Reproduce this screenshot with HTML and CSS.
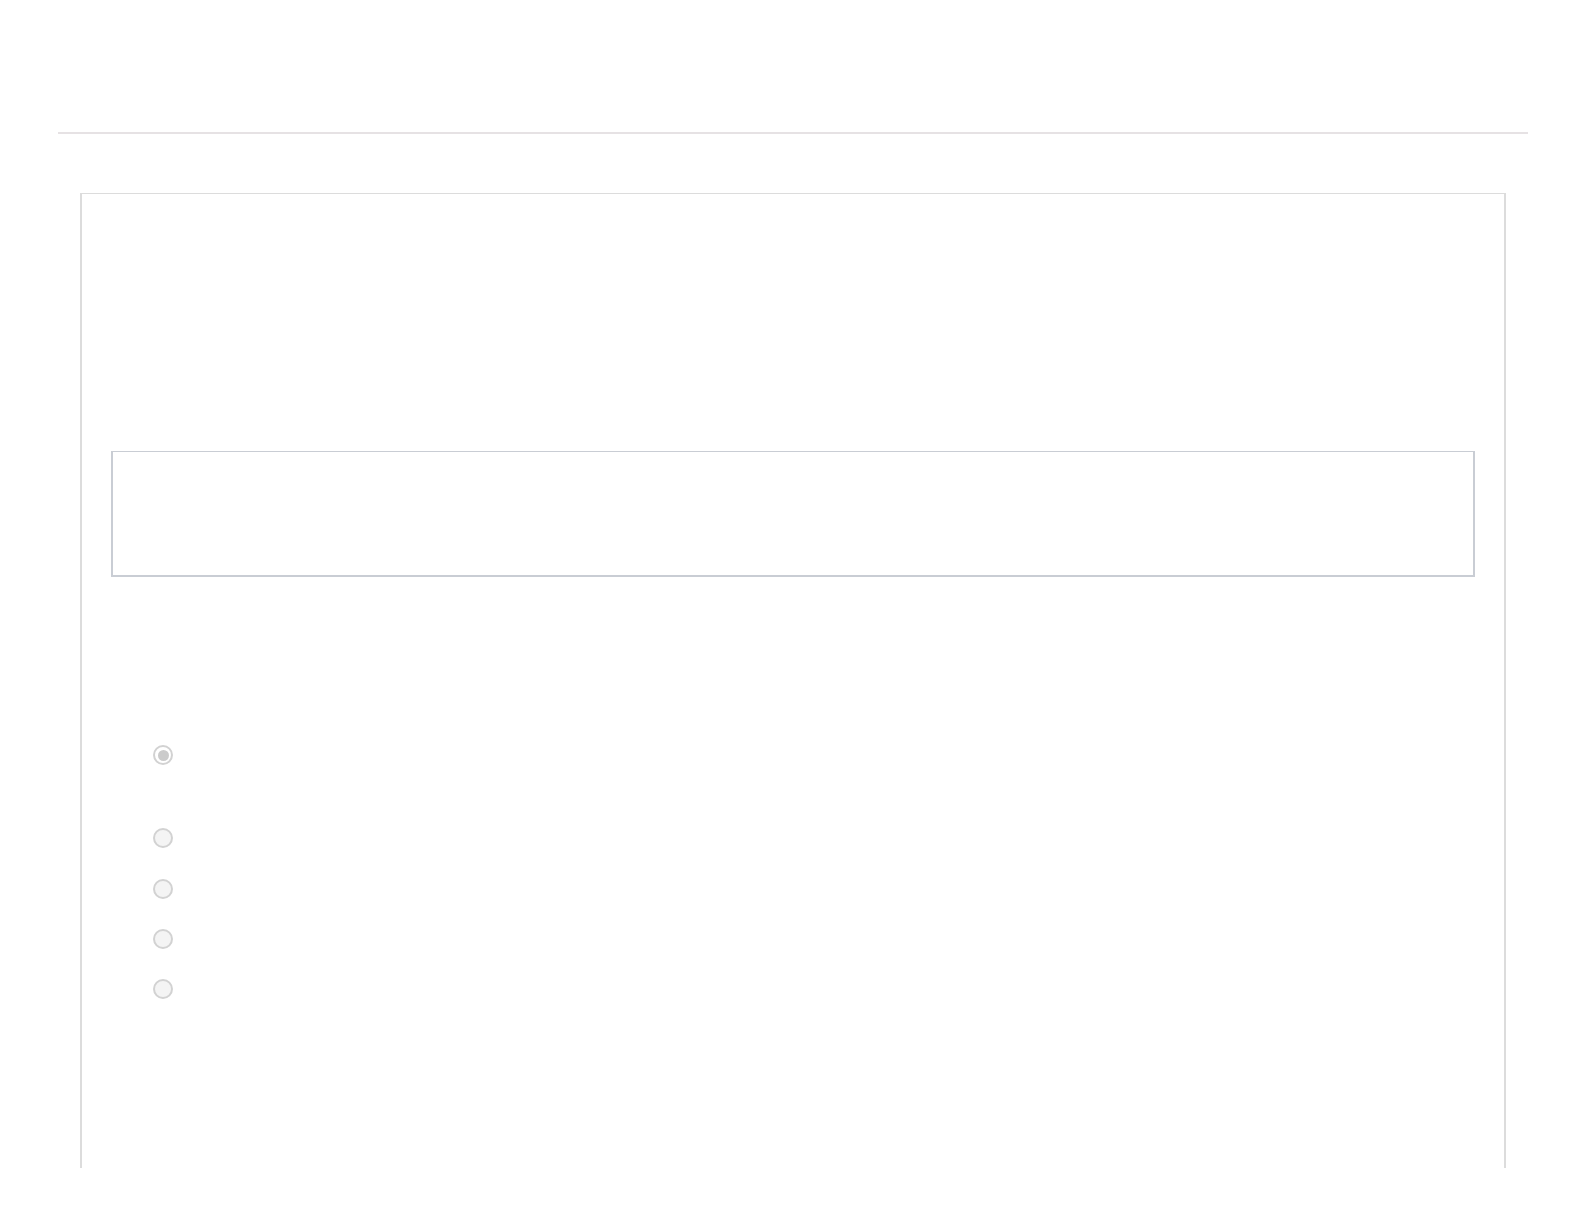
FILE: index.html
```html
<!DOCTYPE html>
<html lang="en">
<head>
<meta charset="utf-8">
<title>Form</title>
<link rel="stylesheet" href="styles.css">
</head>
<body>
<header class="header"></header>
<div class="rule"></div>
<main class="card">
  <div class="textbox"></div>
  <ul class="options">
    <li class="option"><span class="radio checked"></span></li>
    <li class="option first-gap"><span class="radio"></span></li>
    <li class="option third"><span class="radio"></span></li>
    <li class="option"><span class="radio"></span></li>
    <li class="option"><span class="radio"></span></li>
  </ul>
</main>
</body>
</html>
```
FILE: styles.css
```css
html, body {
  margin: 0;
  padding: 0;
  background: #ffffff;
  font-family: "Liberation Sans", Arial, sans-serif;
}
.header {
  height: 132px;
}
.rule {
  height: 2px;
  margin: 0 56px 0 58px;
  background: #e6e2e4;
}
.card {
  box-sizing: border-box;
  margin: 59px 78px 0 80px;
  height: 975px;
  border: 2px solid #dcdcdc;
  border-top-width: 1px;
  border-bottom: none;
  padding: 257px 29px 0 29px;
}
.textbox {
  box-sizing: border-box;
  height: 126px;
  border: 2px solid #c9cdd4;
  border-top-width: 1px;
}
.options {
  list-style: none;
  margin: 168px 0 0 42px;
  padding: 0;
  display: flex;
  flex-direction: column;
}
.option {
  height: 20px;
  margin-top: 30px;
}
.option:first-child {
  margin-top: 0;
}
.option.first-gap {
  margin-top: 63px;
}
.option.third {
  margin-top: 31px;
}
.radio {
  box-sizing: border-box;
  display: flex;
  align-items: center;
  justify-content: center;
  width: 20px;
  height: 20px;
  border-radius: 50%;
  border: 2px solid #d2d2d2;
  background: #f4f4f4;
}
.radio.checked {
  background: #ffffff;
}
.radio.checked::after {
  content: "";
  width: 11px;
  height: 11px;
  border-radius: 50%;
  background: #cbcbcb;
}
```
